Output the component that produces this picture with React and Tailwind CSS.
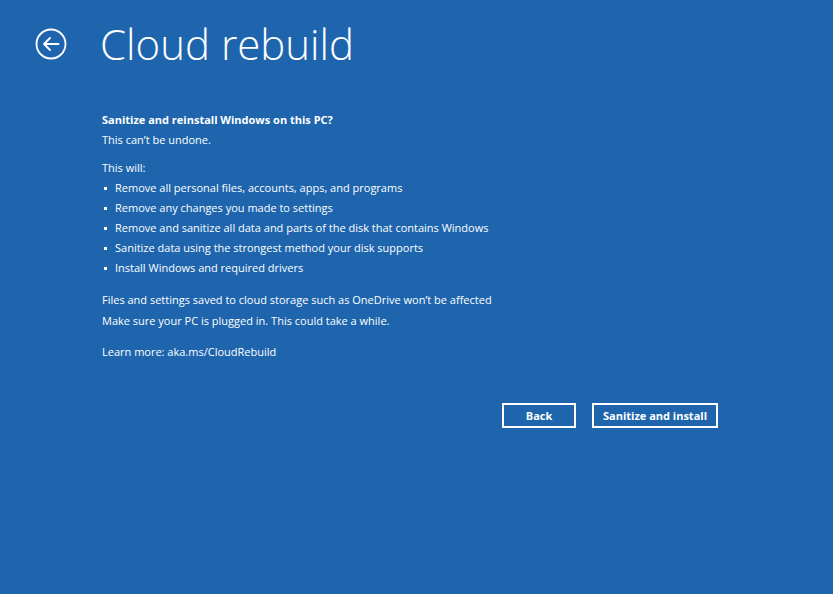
import React from 'react'

const bullets = [
    'Remove all personal files, accounts, apps, and programs',
    'Remove any changes you made to settings',
    'Remove and sanitize all data and parts of the disk that contains Windows',
    'Sanitize data using the strongest method your disk supports',
    'Install Windows and required drivers',
]

const App = () => {
    return (
        <div className="w-[833px] h-[594px] bg-[#1e65ae] text-white overflow-hidden" style={{ fontFamily: '"Open Sans", "Noto Sans", sans-serif' }}>
            {/* Header */}
            <div className="flex items-center pt-[18px] pl-[35px]">
                <svg width="32" height="32" viewBox="0 0 32 32" fill="none" stroke="white" strokeWidth="1.8">
                    <circle cx="16" cy="16" r="14.5" />
                    <path d="M23.5 16H9M15 10l-6 6 6 6" strokeLinecap="round" strokeLinejoin="round" />
                </svg>
                <h1 className="ml-[33px] text-[42px] font-light leading-[52px]">Cloud rebuild</h1>
            </div>

            {/* Body */}
            <div className="pl-[102px] pt-[40px] text-[11px] leading-[20px]">
                <p className="font-bold">Sanitize and reinstall Windows on this PC?</p>
                <p>This can’t be undone.</p>
                <p className="mt-[8px]">This will:</p>
                <ul>
                    {bullets.map((b, i) => (
                        <li key={i} className="flex items-center">
                            <span className="w-[3px] h-[3px] bg-white ml-[2px] mr-[8px]" />
                            {b}
                        </li>
                    ))}
                </ul>
                <p className="mt-[11px] leading-[21px]">Files and settings saved to cloud storage such as OneDrive won’t be affected</p>
                <p className="leading-[21px]">Make sure your PC is plugged in. This could take a while.</p>
                <p className="mt-[11px]">Learn more: aka.ms/CloudRebuild</p>

                <div className="flex gap-[16px] mt-[41px] ml-[400px]">
                    <button className="w-[74px] h-[25px] border-2 border-white font-bold text-[11px]">Back</button>
                    <button className="w-[126px] h-[25px] border-2 border-white font-bold text-[11px]">Sanitize and install</button>
                </div>
            </div>
        </div>
    )
}

export default App
